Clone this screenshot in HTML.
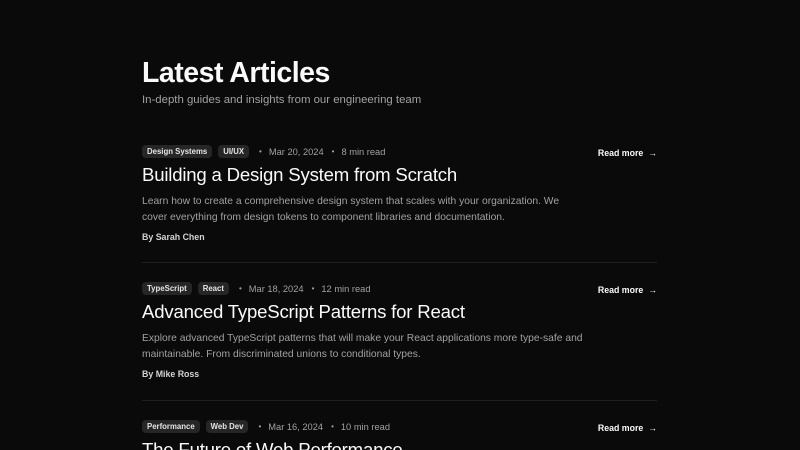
<!DOCTYPE html>
<html style="height:450px;overflow:hidden"><head><style>
body{margin:0;background:#0a0a0a;width:800px;height:450px;overflow:hidden;position:relative;font-family:"Liberation Sans",sans-serif;color:#fafafa}
.wrap{position:absolute;left:142px;width:515px;top:0;height:450px;overflow:hidden}
h1{position:absolute;top:57px;margin:0;font-size:28.5px;font-weight:700;letter-spacing:-0.5px;white-space:nowrap}
.sub{position:absolute;top:94px;font-size:11.4px;color:#a1a1a1;white-space:nowrap}
.art{position:absolute;left:0;width:515px;height:125px}
.hr{position:absolute;left:0;width:515px;height:1px;background:#1f1f1f}
.meta{position:absolute;top:8px;left:0;display:flex;align-items:center;font-size:9.3px;color:#a1a1a1;white-space:nowrap}
.tag{background:#262626;color:#e5e5e5;font-weight:700;font-size:7.8px;padding:2px 5px;border-radius:4px;margin-right:6px}
.dot{margin:0 7px 0 4px;font-size:8px}
.t{position:absolute;top:27px;font-size:18.6px;white-space:nowrap;letter-spacing:-0.2px}
.d{position:absolute;top:57px;font-size:10.3px;line-height:16px;color:#a1a1a1;width:430px}
.a{position:absolute;top:95px;font-size:8.8px;font-weight:700;color:#d4d4d4}
.r{position:absolute;right:0;top:11px;font-size:8.8px;font-weight:700;white-space:nowrap}
</style></head><body><div class="wrap">
<h1>Latest Articles</h1>
<div class="sub">In-depth guides and insights from our engineering team</div>
<div class="art" style="top:137px">
<div class="meta"><span class="tag">Design Systems</span><span class="tag">UI/UX</span><span class="dot">•</span>Mar 20, 2024<span class="dot" style="margin-left:8px">•</span>8 min read</div>
<div class="t">Building a Design System from Scratch</div>
<div class="d">Learn how to create a comprehensive design system that scales with your organization. We cover everything from design tokens to component libraries and documentation.</div>
<div class="a">By Sarah Chen</div><div class="r">Read more &nbsp;→</div></div>
<div class="hr" style="top:262px"></div>
<div class="art" style="top:274px">
<div class="meta"><span class="tag">TypeScript</span><span class="tag">React</span><span class="dot">•</span>Mar 18, 2024<span class="dot" style="margin-left:8px">•</span>12 min read</div>
<div class="t">Advanced TypeScript Patterns for React</div>
<div class="d" style="width:445px">Explore advanced TypeScript patterns that will make your React applications more type-safe and maintainable. From discriminated unions to conditional types.</div>
<div class="a">By Mike Ross</div><div class="r">Read more &nbsp;→</div></div>
<div class="hr" style="top:400px"></div>
<div class="art" style="top:412px">
<div class="meta"><span class="tag">Performance</span><span class="tag">Web Dev</span><span class="dot">•</span>Mar 16, 2024<span class="dot" style="margin-left:8px">•</span>10 min read</div>
<div class="t">The Future of Web Performance</div>
<div class="r">Read more &nbsp;→</div></div>
</div></body></html>
